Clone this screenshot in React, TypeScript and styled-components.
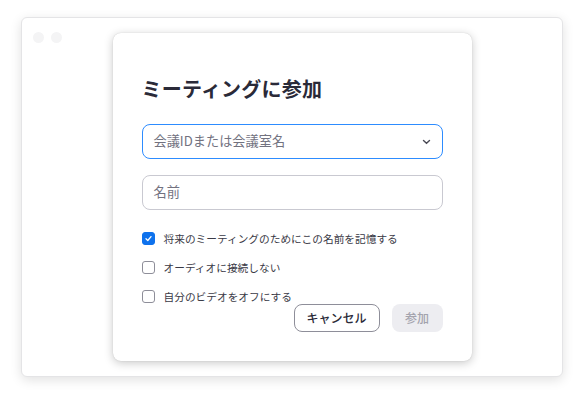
import React from 'react';
import styled, { createGlobalStyle } from 'styled-components';

const GlobalStyle = createGlobalStyle`
  html, body {
    margin: 0;
    padding: 0;
    background: #ffffff;
    font-family: "Noto Sans CJK JP", "Noto Sans", sans-serif;
  }
`;

const options = [
  { label: '将来のミーティングのためにこの名前を記憶する', checked: true },
  { label: 'オーディオに接続しない', checked: false },
  { label: '自分のビデオをオフにする', checked: false },
];

export default () => (
  <>
    <GlobalStyle />
    <Desktop>
      <Window>
        <Dots>
          <Dot />
          <Dot />
        </Dots>
        <Dialog>
          <Title>ミーティングに参加</Title>
          <Select>
            <Placeholder>会議IDまたは会議室名</Placeholder>
            <svg width="9" height="6" viewBox="0 0 9 6">
              <path d="M1.5 1.5 L4.5 4.3 L7.5 1.5" fill="none" stroke="#4a4a55" strokeWidth="1.4" strokeLinecap="round" />
            </svg>
          </Select>
          <TextField>
            <Placeholder>名前</Placeholder>
          </TextField>
          <Options>
            {options.map((o) => (
              <OptionRow key={o.label}>
                <Box checked={o.checked}>
                  {o.checked && (
                    <svg width="9" height="9" viewBox="0 0 9 9">
                      <path d="M2 4.8 L3.8 6.5 L7 2.6" fill="none" stroke="#fff" strokeWidth="1.3" strokeLinecap="round" strokeLinejoin="round" />
                    </svg>
                  )}
                </Box>
                <OptionLabel>{o.label}</OptionLabel>
              </OptionRow>
            ))}
          </Options>
          <Actions>
            <CancelButton>キャンセル</CancelButton>
            <JoinButton>参加</JoinButton>
          </Actions>
        </Dialog>
      </Window>
    </Desktop>
  </>
);

const Desktop = styled.div`
  width: 584px;
  height: 402px;
  padding: 17px 0 0 21px;
  box-sizing: border-box;
`;

const Window = styled.div`
  position: relative;
  width: 542px;
  height: 360px;
  box-sizing: border-box;
  background: #fff;
  border: 1px solid #e4e4e6;
  border-radius: 6px;
  box-shadow: 0 3px 12px rgba(0, 0, 0, 0.12);
  padding-top: 15px;
`;

const Dots = styled.div`
  position: absolute;
  top: 14px;
  left: 11px;
  display: flex;
  gap: 7px;
`;

const Dot = styled.span`
  width: 11px;
  height: 11px;
  border-radius: 50%;
  background: #f4f4f5;
`;

const Dialog = styled.div`
  width: 359px;
  height: 328px;
  margin: 0 auto;
  box-sizing: border-box;
  padding: 43px 29px 0;
  background: #fff;
  border-radius: 8px;
  box-shadow: 0 2px 10px rgba(0, 0, 0, 0.22), 0 0 1px rgba(0, 0, 0, 0.2);
  display: flex;
  flex-direction: column;
`;

const Title = styled.h1`
  margin: 0;
  font-size: 20px;
  line-height: 26px;
  font-weight: 700;
  color: #2a2a38;
  letter-spacing: 0.2px;
`;

const Field = styled.div`
  height: 35px;
  box-sizing: border-box;
  border-radius: 8px;
  display: flex;
  align-items: center;
  justify-content: space-between;
  padding: 0 11px 3px 11px;
`;

const Select = styled(Field)`
  margin-top: 22px;
  border: 1px solid #2d8cff;
  & svg {
    margin-top: 3px;
  }
`;

const TextField = styled(Field)`
  margin-top: 16px;
  border: 1px solid #c9c9d1;
`;

const Placeholder = styled.span`
  font-size: 13.2px;
  color: #72727f;
`;

const Options = styled.div`
  margin-top: 22px;
  display: flex;
  flex-direction: column;
  gap: 16px;
`;

const OptionRow = styled.label`
  display: flex;
  align-items: center;
  height: 13px;
  gap: 9px;
`;

const Box = styled.span<{ checked: boolean }>`
  width: 13px;
  height: 13px;
  box-sizing: border-box;
  border-radius: 3px;
  display: flex;
  align-items: center;
  justify-content: center;
  background: ${(p) => (p.checked ? '#0e72ed' : '#fff')};
  border: 1px solid ${(p) => (p.checked ? '#0e72ed' : '#8e8e99')};
`;

const OptionLabel = styled.span`
  font-size: 10.7px;
  line-height: 13px;
  color: #3a3a46;
`;

const Actions = styled.div`
  margin-top: 1px;
  display: flex;
  justify-content: flex-end;
  gap: 12px;
`;

const Button = styled.button`
  height: 28px;
  box-sizing: border-box;
  border-radius: 8px;
  font-family: inherit;
  font-size: 12px;
  font-weight: 500;
  padding: 0 0 2px;
`;

const CancelButton = styled(Button)`
  width: 86px;
  background: #fff;
  border: 1px solid #8e8e99;
  color: #2a2a38;
`;

const JoinButton = styled(Button)`
  width: 51px;
  background: #ededf1;
  border: none;
  color: #a3a3ad;
`;
